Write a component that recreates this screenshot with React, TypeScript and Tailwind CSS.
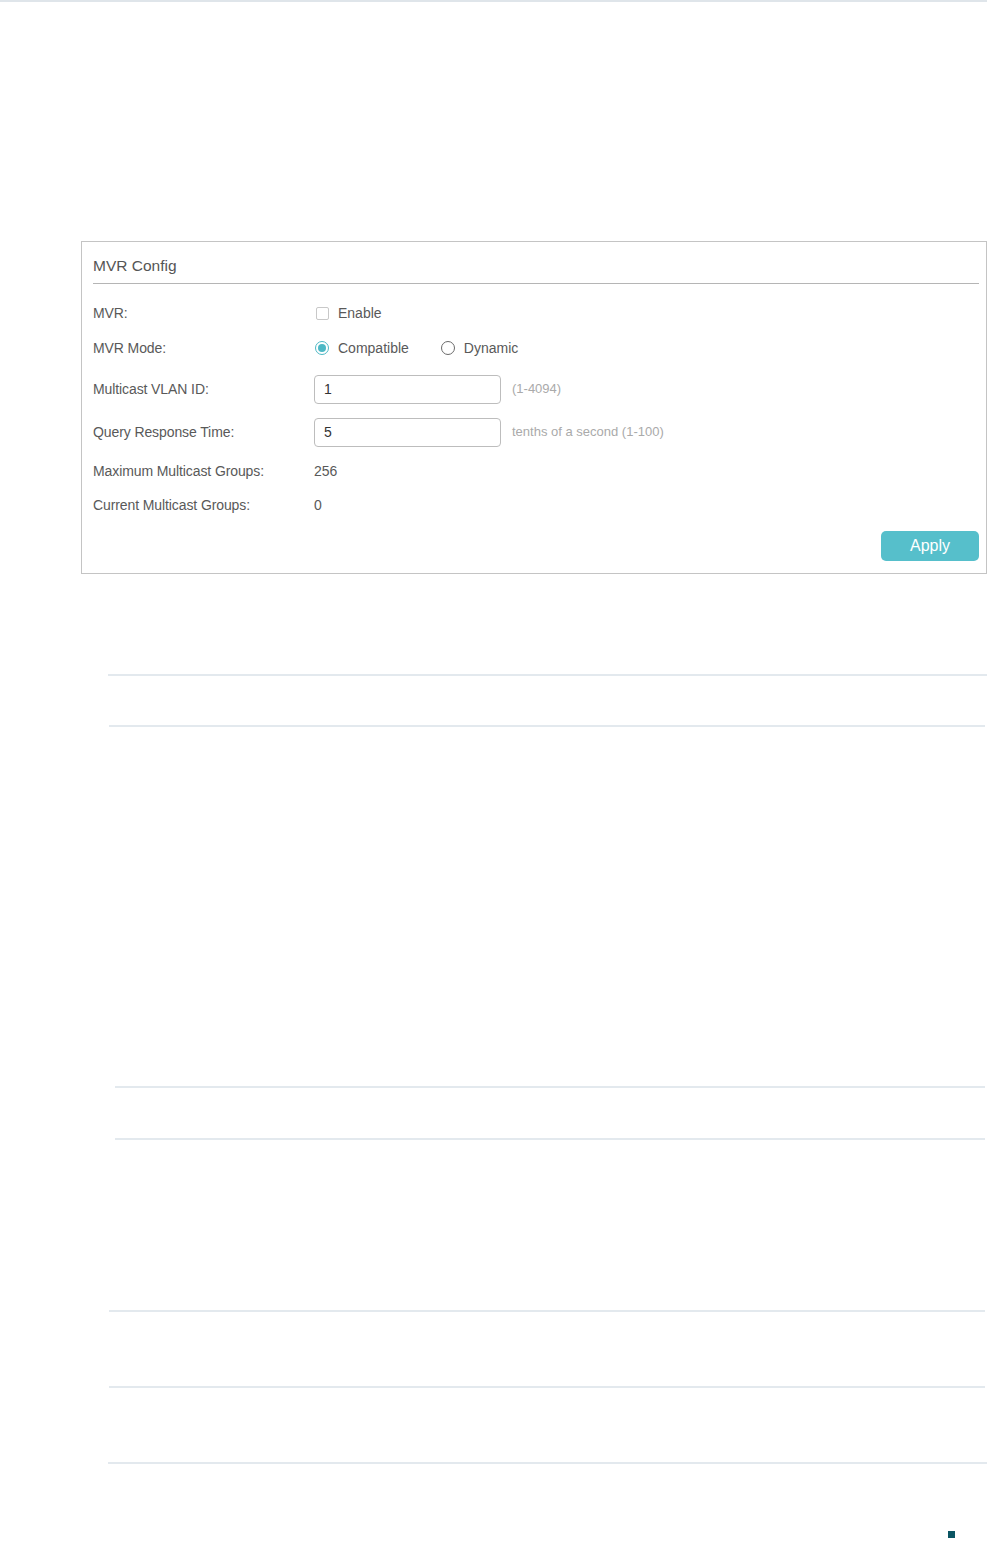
import React from 'react'

const font = { fontFamily: '"Liberation Sans", Arial, Helvetica, sans-serif' }

function Row({ label, h, children }: { label: string; h: string; children: React.ReactNode }): JSX.Element {
  return (
    <div className={`flex items-center ${h}`}>
      <div className="w-[221px] shrink-0 text-[14px] tracking-[-0.1px] text-[#595959]">{label}</div>
      <div className="flex items-center text-[14px] text-[#595959]">{children}</div>
    </div>
  )
}

function Radio({ checked }: { checked?: boolean }): JSX.Element {
  return checked ? (
    <span className="flex h-[14px] w-[14px] items-center justify-center rounded-full border border-[#4db8c5] bg-white">
      <span className="h-[8px] w-[8px] rounded-full bg-[#4db8c5]" />
    </span>
  ) : (
    <span className="h-[14px] w-[14px] rounded-full border border-[#6a6a6a] bg-white" />
  )
}

function Line({ cls }: { cls: string }): JSX.Element {
  return <div className={`h-[2px] bg-[#e3e9ee] ${cls}`} />
}

export default function App(): JSX.Element {
  return (
    <div className="relative min-h-[1542px] w-[987px] bg-white" style={font}>
      <div className="h-[2px] w-full bg-[#dfe5ea]" />

      {/* MVR Config panel */}
      <div className="ml-[81px] mt-[239px] w-[906px] border border-[#c4c4c4] pl-[11px] pr-[7px] pb-[12px]">
        <div className="border-b border-[#b5b5b5] pt-[14px] pb-[7px] text-[15.5px] leading-[20px] text-[#555]">MVR Config</div>

        <div className="mt-[12px] flex flex-col">
          <Row label="MVR:" h="h-[34px]">
            <span className="ml-[2px] h-[13px] w-[13px] rounded-[2px] border border-[#c8c8c8] bg-white" />
            <span className="ml-[9px]">Enable</span>
          </Row>
          <Row label="MVR Mode:" h="h-[36px]">
            <span className="ml-[1px]" />
            <Radio checked />
            <span className="ml-[9px]">Compatible</span>
            <span className="ml-[32px]" />
            <Radio />
            <span className="ml-[9px]">Dynamic</span>
          </Row>
          <Row label="Multicast VLAN ID:" h="h-[46px]">
            <div className="flex h-[29px] w-[187px] items-center rounded-[4px] border border-[#bdbdbd] px-[9px] text-[#333]">1</div>
            <span className="ml-[11px] text-[13px] text-[#aaa]">(1-4094)</span>
          </Row>
          <Row label="Query Response Time:" h="h-[40px]">
            <div className="flex h-[29px] w-[187px] items-center rounded-[4px] border border-[#bdbdbd] px-[9px] text-[#333]">5</div>
            <span className="ml-[11px] text-[13px] text-[#aaa]">tenths of a second (1-100)</span>
          </Row>
          <Row label="Maximum Multicast Groups:" h="h-[38px]">
            <span>256</span>
          </Row>
          <Row label="Current Multicast Groups:" h="h-[30px]">
            <span>0</span>
          </Row>
        </div>

        <div className="mt-[11px] flex justify-end">
          <button className="h-[30px] w-[98px] rounded-[5px] bg-[#56bfcb] text-[16px] text-white">Apply</button>
        </div>
      </div>

      <Line cls="ml-[108px] mt-[100px] w-[879px]" />
      <Line cls="ml-[109px] mt-[49px] w-[876px]" />
      <Line cls="ml-[115px] mt-[359px] w-[870px]" />
      <Line cls="ml-[115px] mt-[50px] w-[870px]" />
      <Line cls="ml-[109px] mt-[170px] w-[876px]" />
      <Line cls="ml-[109px] mt-[74px] w-[876px]" />
      <Line cls="ml-[108px] mt-[74px] w-[879px]" />

      <div className="ml-[948px] mt-[67px] h-[7px] w-[7px] bg-[#0b5563]" />
    </div>
  )
}
